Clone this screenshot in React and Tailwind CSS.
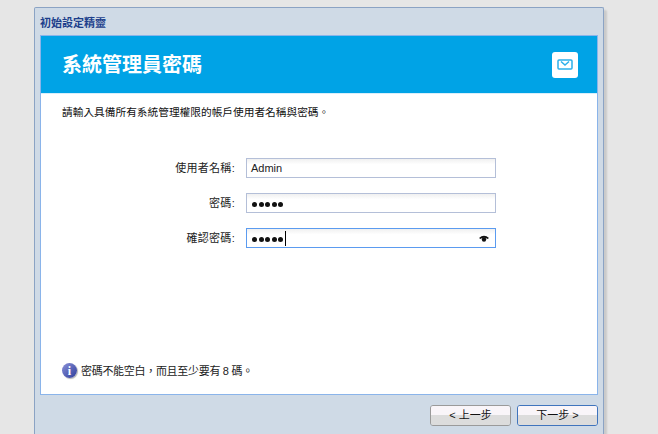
const cjk = "font-['Liberation_Sans','Noto_Sans_CJK_TC',sans-serif]";

function Field({ label, children, active }) {
  return (
    <div className="flex items-center">
      <label className="w-[176px] pr-[1px] text-right text-[11px] leading-[14px] tracking-[0.3px] text-[#222]">{label}</label>
      <div
        className={
          "ml-[10px] flex h-[20px] w-[250px] items-center justify-between bg-gradient-to-b from-[#f0f0f0] to-white to-30% pl-[4px] pr-[6px] border " +
          (active ? "border-[#5b9bf0]" : "border-[#b4bfd8]")
        }
      >
        {children}
      </div>
    </div>
  );
}

function Dots({ caret }) {
  return (
    <div className="flex items-center gap-[1.5px] pl-[1px]">
      {[0, 1, 2, 3, 4].map((i) => (
        <span key={i} className="mt-[2px] h-[5px] w-[5px] rounded-full bg-[#111]" />
      ))}
      {caret && <span className="ml-[0.5px] h-[15px] w-[1px] bg-black" />}
    </div>
  );
}

function WizardButton({ children, primary }) {
  return (
    <button
      type="button"
      className={
        "flex h-[21px] w-[81px] flex-col overflow-hidden rounded-[3px] border " +
        (primary ? "border-[#3f74bd]" : "border-[#9a9a9a]")
      }
    >
      <span className="relative flex h-full w-full items-center justify-center bg-gradient-to-b from-[#f9f5f9] from-50% to-[#dcdcdc] to-50% text-[11px] leading-none text-[#111]">
        {children}
      </span>
    </button>
  );
}

export default function App() {
  return (
    <div className={"h-[434px] w-[658px] overflow-hidden bg-[#e6e6e6] pl-[34px] pt-[7px] " + cjk}>
      <div className="h-[440px] w-[570px] rounded-t-[2px] border border-[#8ba3c4] border-b-0 bg-[#cfdae6] shadow-[3px_3px_2px_rgba(0,0,0,0.12)]">
        <div className="h-[27px] pl-[5px] pt-[8px] text-[11px] font-bold leading-[14px] text-[#1c3f8c]">初始設定精靈</div>
        <div className="ml-[5px] flex h-[360px] w-[558px] flex-col border border-[#8ab4ea] bg-white">
          <div className="flex h-[58px] items-center justify-between border-b border-[#d8eefa] bg-[#00a3e6] pl-[21px] pr-[19px]">
            <h1 className="text-[20px] font-bold leading-[26px] text-white">系統管理員密碼</h1>
            <div className="flex h-[26px] w-[26px] items-center justify-center rounded-[3px] bg-white">
              <svg width="16" height="11" viewBox="0 0 16 11" fill="none" stroke="#2cb0ea" strokeWidth="1.5">
                <rect x="1" y="1" width="14" height="9" rx="1" />
                <path d="M4 2.500 8 6 12 2.500" />
              </svg>
            </div>
          </div>
          <p className="pl-[21px] pt-[11px] text-[10.7px] leading-[14px] text-[#111]">
            請輸入具備所有系統管理權限的帳戶使用者名稱與密碼。
          </p>
          <div className="flex flex-col gap-[15px] pl-[19px] pt-[39px]">
            <Field label="使用者名稱:">
              <span className="text-[11px] leading-none text-[#222]">Admin</span>
            </Field>
            <Field label="密碼:">
              <Dots />
            </Field>
            <Field label="確認密碼:" active>
              <Dots caret />
              <svg width="10" height="7" viewBox="0 0 10 7">
                <path d="M0 3Q5-1.500 10 3L8.500 4Q5 1.500 1.500 4Z" fill="#111" />
                <circle cx="5" cy="4.500" r="2.200" fill="#111" />
              </svg>
            </Field>
          </div>
          <div className="mt-auto flex items-center gap-[4px] pb-[16px] pl-[21px]">
            <span className="flex h-[15px] w-[15px] items-center justify-center rounded-full bg-gradient-to-br from-[#8d92d8] to-[#2f3a9a] font-['Liberation_Serif',serif] text-[12px] font-bold leading-none text-white shadow-[1px_1px_1px_rgba(0,0,0,0.3)]">
              i
            </span>
            <span className="text-[11px] leading-[14px] tracking-[-0.3px] text-[#222]">{"密碼不能空白\uFF0C而且至少要有 8 碼。"}</span>
          </div>
        </div>
        <div className="flex justify-end gap-[6px] pr-[5px] pt-[10px]">
          <WizardButton>&lt; 上一步</WizardButton>
          <WizardButton primary>下一步 &gt;</WizardButton>
        </div>
      </div>
    </div>
  );
}
